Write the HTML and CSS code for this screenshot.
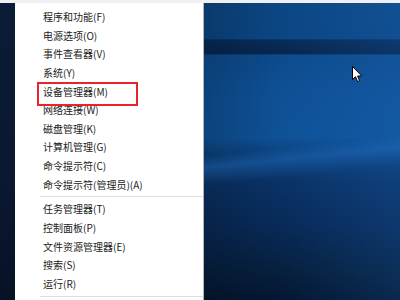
FILE: index.html
```html
<!DOCTYPE html>
<html lang="zh-CN">
<head>
<meta charset="utf-8">
<link rel="stylesheet" href="styles.css">
</head>
<body>
<div class="topbar"></div>
<div class="screen">
  <div class="edge"></div>
  <div class="menu">
    <ul class="group">
      <li class="item">程序和功能(F)</li>
      <li class="item">电源选项(O)</li>
      <li class="item">事件查看器(V)</li>
      <li class="item">系统(Y)</li>
      <li class="item marked">设备管理器(M)</li>
      <li class="item">网络连接(W)</li>
      <li class="item">磁盘管理(K)</li>
      <li class="item">计算机管理(G)</li>
      <li class="item">命令提示符(C)</li>
      <li class="item">命令提示符(管理员)(A)</li>
    </ul>
    <div class="sep"></div>
    <ul class="group">
      <li class="item">任务管理器(T)</li>
      <li class="item">控制面板(P)</li>
      <li class="item">文件资源管理器(E)</li>
      <li class="item">搜索(S)</li>
      <li class="item">运行(R)</li>
    </ul>
    <div class="sep"></div>
  </div>
  <div class="desktop">
    <div class="band"></div>
    <div class="glow"></div>
    <svg class="cursor" width="11" height="17" viewBox="0 0 11 17">
      <path d="M0.5 0.5 L0.5 13.5 L3.5 10.7 L5.6 15.6 L7.6 14.7 L5.6 10 L9.8 10 Z" fill="#fff" stroke="#000" stroke-width="1"/>
    </svg>
  </div>
</div>
</body>
</html>
```
FILE: styles.css
```css
* { box-sizing: border-box; }
html, body { margin: 0; padding: 0; }
body {
  width: 400px;
  height: 300px;
  overflow: hidden;
  background: #f2f2f2;
  font-family: "Noto Sans CJK SC", "Noto Sans", sans-serif;
}
.topbar {
  height: 3px;
  background: #f0f0f0;
}
.screen {
  display: flex;
  height: 297px;
}
.edge {
  width: 15px;
  background: linear-gradient(180deg, #0c1c36 0%, #0a1830 60%, #071226 100%);
}
.menu {
  width: 189px;
  background: #fff;
  border-right: 1px solid #b4b4b4;
  padding-top: 5px;
}
.group {
  list-style: none;
  margin: 0;
  padding: 0;
}
.item {
  height: 18.65px;
  line-height: 18.65px;
  padding-left: 28px;
  font-size: 10px;
  color: #1b1b1b;
  white-space: nowrap;
}
.marked {
  position: relative;
}
.marked::after {
  content: "";
  position: absolute;
  left: 22px;
  top: -1px;
  width: 97px;
  height: 20px;
  border: 2px solid #e8232b;
}
.sep {
  height: 1px;
  margin: 2px 0 3px 25px;
  background: #e0e0e0;
}
.desktop {
  flex: 1;
  position: relative;
  overflow: hidden;
  background:
    linear-gradient(180deg,
      #0c4783 0%,
      #0b4685 12%,
      #082c58 12.5%,
      #072650 17%,
      #0d4b8c 17.5%,
      #0e5096 30%,
      #0e5298 45%,
      #0b3f7a 52%,
      #0a3368 60%,
      #082a58 75%,
      #06203f 90%,
      #041732 100%);
}
.band {
  position: absolute;
  inset: 0;
  background: linear-gradient(90deg, rgba(0,0,0,0.18) 0%, rgba(0,0,0,0) 40%, rgba(40,120,210,0.18) 100%);
}
.glow {
  position: absolute;
  left: -40px;
  top: 140px;
  width: 320px;
  height: 30px;
  transform: rotate(-6deg);
  background: linear-gradient(180deg, rgba(40,120,210,0) 0%, rgba(40,120,210,0.35) 40%, rgba(20,80,160,0) 100%);
}
.cursor {
  position: absolute;
  left: 148px;
  top: 63px;
}
```
